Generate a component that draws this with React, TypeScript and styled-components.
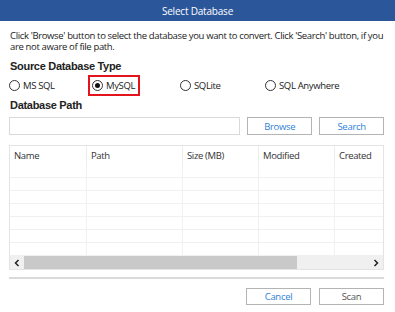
import React from "react";
import styled, { createGlobalStyle } from "styled-components";

const Global = createGlobalStyle`
  html, body { margin: 0; padding: 0; background: #fff; }
  * { box-sizing: border-box; }
`;

const Dialog = styled.div`
  width: 395px;
  height: 312px;
  background: #fff;
  font-family: "Open Sans", "Noto Sans", sans-serif;
  font-size: 9.5px;
  letter-spacing: -0.35px;
  color: #222;
  display: flex;
  flex-direction: column;
  overflow: hidden;
`;

const TitleBar = styled.div`
  height: 21px;
  background: #2b569a;
  color: #fff;
  font-size: 10px;
  letter-spacing: -0.2px;
  display: flex;
  align-items: center;
  justify-content: center;
  padding-top: 1px;
`;

const Body = styled.div`
  padding: 0 11px 0 9px;
  display: flex;
  flex-direction: column;
`;

const Description = styled.p`
  margin: 9px 0 0 1px;
  line-height: 11px;
  color: #222;
  white-space: nowrap;
`;

const Heading = styled.h3<{ $mt: number }>`
  margin: ${(p) => p.$mt}px 0 0 1px;
  font-family: "Liberation Sans", Arial, sans-serif;
  font-weight: bold;
  font-size: 11px;
  letter-spacing: -0.3px;
  line-height: 13px;
  color: #222;
`;

const RadioRow = styled.div`
  margin-top: 6px;
  height: 13px;
  display: grid;
  grid-template-columns: 83px 88px 85px auto;
  align-items: center;
`;

const Option = styled.label<{ $marked?: boolean }>`
  display: inline-flex;
  align-items: center;
  gap: 3px;
  height: 13px;
  justify-self: start;
  color: #222;
  white-space: nowrap;
  ${(p) =>
    p.$marked
      ? `outline: 2px solid #e3141b; outline-offset: 2px; padding-right: 1px;`
      : ""}
`;

const Circle = styled.span<{ $checked?: boolean }>`
  width: 11px;
  height: 11px;
  border-radius: 50%;
  border: 1px solid #333;
  background: #fff;
  display: inline-flex;
  align-items: center;
  justify-content: center;
  &::after {
    content: "";
    width: 5px;
    height: 5px;
    border-radius: 50%;
    background: ${(p) => (p.$checked ? "#111" : "transparent")};
  }
`;

const PathRow = styled.div`
  margin-top: 5px;
  height: 18px;
  display: flex;
  gap: 7px;
`;

const PathInput = styled.div`
  width: 232px;
  height: 18px;
  border: 1px solid #d9d9d9;
  background: #fff;
`;

const Button = styled.button<{ $disabled?: boolean }>`
  width: 65px;
  height: 100%;
  border: 1px solid #b4b4b4;
  background: #fff;
  font-family: "Open Sans", "Noto Sans", sans-serif;
  font-size: 9.5px;
  letter-spacing: -0.3px;
  color: ${(p) => (p.$disabled ? "#555" : "#2f7fd9")};
  padding: 0;
  display: flex;
  align-items: center;
  justify-content: center;
`;

const Table = styled.div`
  margin-top: 10px;
  width: 375px;
  border: 1px solid #e4e4e4;
  display: flex;
  flex-direction: column;
`;

const cols = "77px 96px 76px 76px 1fr";

const HeaderRow = styled.div`
  height: 19px;
  display: grid;
  grid-template-columns: ${cols};
`;

const HeaderCell = styled.div`
  padding-left: 4px;
  line-height: 19px;
  color: #333;
  border-right: 1px solid #ececec;
  &:last-child { border-right: none; }
`;

const DataRow = styled.div`
  height: 13px;
  display: grid;
  grid-template-columns: ${cols};
  border-bottom: 1px solid #f0f0f0;
`;

const DataCell = styled.div`
  border-right: 1px solid #f0f0f0;
  &:last-child { border-right: none; }
`;

const ScrollBar = styled.div`
  height: 13px;
  background: #f0f0f0;
  display: flex;
  align-items: center;
`;

const Arrow = styled.div`
  width: 14px;
  height: 13px;
  display: flex;
  align-items: center;
  justify-content: center;
`;

const Track = styled.div`
  flex: 1;
  height: 13px;
  display: flex;
`;

const Thumb = styled.div`
  height: 13px;
  background: #c9c9c9;
`;

const Separator = styled.div`
  margin-top: 7px;
  height: 2px;
  background: #dadada;
`;

const Footer = styled.div`
  margin-top: 9px;
  height: 17px;
  display: flex;
  justify-content: flex-end;
  gap: 8px;
`;

const Chevron = ({ dir }: { dir: "left" | "right" }) => (
  <svg width="6" height="8" viewBox="0 0 6 8">
    <path
      d={dir === "left" ? "M4.5 1 L1.5 4 L4.5 7" : "M1.5 1 L4.5 4 L1.5 7"}
      fill="none"
      stroke="#222"
      strokeWidth="1.5"
    />
  </svg>
);

const options = [
  { label: "MS SQL" },
  { label: "MySQL", checked: true },
  { label: "SQLite" },
  { label: "SQL Anywhere" },
];

const headers = ["Name", "Path", "Size (MB)", "Modified", "Created"];
const rowCount = 7;

export default function App() {
  return (
    <>
      <Global />
      <Dialog>
        <TitleBar>Select Database</TitleBar>
        <Body>
          <Description>
            Click 'Browse' button to select the database you want to convert. Click 'Search' button, if you
            <br />
            are not aware of file path.
          </Description>
          <Heading $mt={8}>Source Database Type</Heading>
          <RadioRow>
            {options.map((o) => (
              <Option key={o.label} $marked={o.checked}>
                <Circle $checked={o.checked} />
                {o.label}
              </Option>
            ))}
          </RadioRow>
          <Heading $mt={7}>Database Path</Heading>
          <PathRow>
            <PathInput />
            <Button>Browse</Button>
            <Button>Search</Button>
          </PathRow>
          <Table>
            <HeaderRow>
              {headers.map((h) => (
                <HeaderCell key={h}>{h}</HeaderCell>
              ))}
            </HeaderRow>
            {Array.from({ length: rowCount }).map((_, i) => (
              <DataRow key={i}>
                {headers.map((c) => (
                  <DataCell key={c} />
                ))}
              </DataRow>
            ))}
            <ScrollBar>
              <Arrow>
                <Chevron dir="left" />
              </Arrow>
              <Track>
                <Thumb style={{ width: "79%" }} />
              </Track>
              <Arrow>
                <Chevron dir="right" />
              </Arrow>
            </ScrollBar>
          </Table>
          <Separator />
          <Footer>
            <Button>Cancel</Button>
            <Button $disabled>Scan</Button>
          </Footer>
        </Body>
      </Dialog>
    </>
  );
}
